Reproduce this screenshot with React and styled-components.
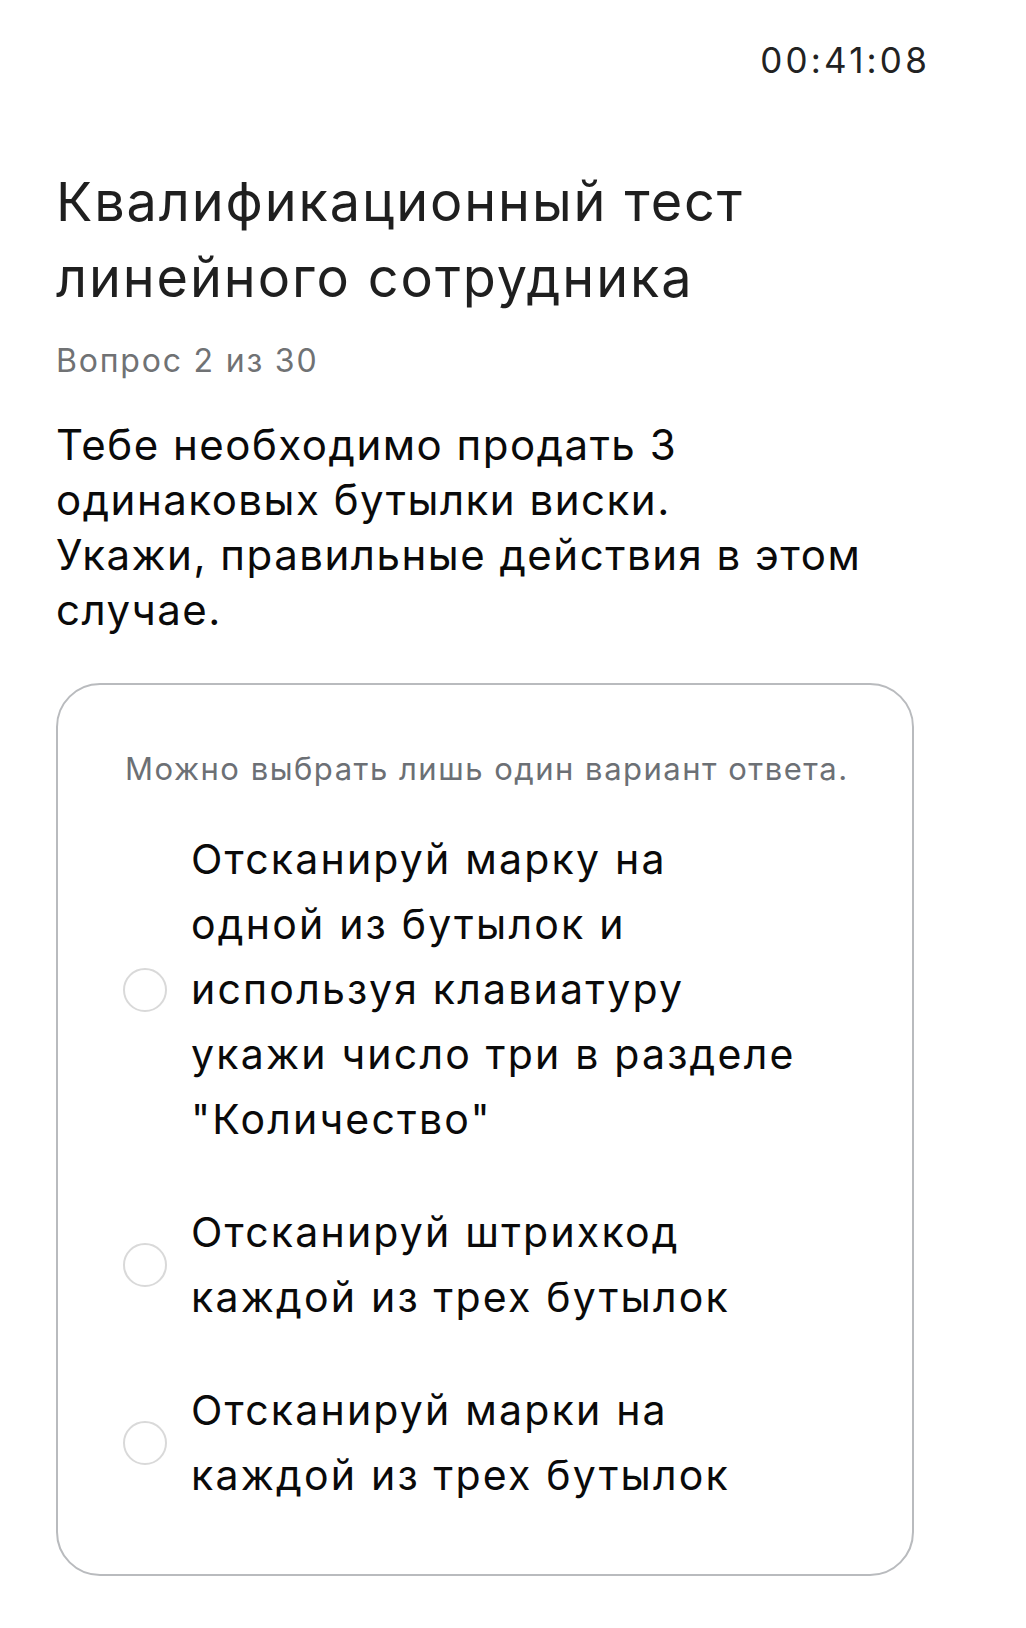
import React from 'react'
import styled, {createGlobalStyle} from 'styled-components'

const GlobalStyle = createGlobalStyle`
  html, body {
    margin: 0;
    padding: 0;
    background: #ffffff;
  }
  body {
    font-family: Inter, "Noto Sans", sans-serif;
    -webkit-font-smoothing: antialiased;
  }
`;

const Page = styled.div`
  width: 1026px;
  min-height: 1628px;
  box-sizing: border-box;
  padding: 40px 99px 40px 56px;
  display: flex;
  flex-direction: column;
`;

const TopBar = styled.div`
  display: flex;
  justify-content: flex-end;
`;

const Timer = styled.span`
  font-size: 35px;
  line-height: 40px;
  color: #222222;
  letter-spacing: 3.2px;
  margin-right: -3px;
`;

const Title = styled.h1`
  margin: 84px 0 0 0;
  font-size: 54px;
  line-height: 76px;
  font-weight: 400;
  color: #1f1f1f;
  letter-spacing: 1.9px;
`;

const Counter = styled.div`
  margin: 25px 0 0 0;
  font-size: 32px;
  line-height: 40px;
  color: #707274;
  letter-spacing: 1.8px;
`;

const Question = styled.p`
  margin: 36px 0 0 0;
  font-size: 42px;
  line-height: 55px;
  color: #0a0a0a;
  letter-spacing: 1.5px;
`;

const Card = styled.div`
  margin-top: 46px;
  width: 858px;
  box-sizing: border-box;
  border: 2px solid #b9bbbe;
  border-radius: 44px;
  padding: 64px 40px 66px 67px;
  display: flex;
  flex-direction: column;
`;

const Hint = styled.div`
  font-size: 31px;
  line-height: 40px;
  color: #6c7075;
  letter-spacing: 1.5px;
`;

const Options = styled.div`
  margin-top: 38px;
  display: flex;
  flex-direction: column;
  gap: 48px;
`;

const Option = styled.label`
  display: flex;
  align-items: center;
  gap: 24px;
  cursor: pointer;
`;

const Radio = styled.span`
  flex: none;
  width: 44px;
  height: 44px;
  box-sizing: border-box;
  border-radius: 50%;
  border: 2px solid ${p => (p.checked ? '#1f1f1f' : '#d9d9d9')};
  margin-left: -2px;
`;

const OptionText = styled.span`
  font-size: 41px;
  line-height: 65px;
  color: #0a0a0a;
  letter-spacing: 2.2px;
`;

const options = [
    ['Отсканируй марку на', 'одной из бутылок и', 'используя клавиатуру', 'укажи число три в разделе', '"Количество"'],
    ['Отсканируй штрихкод', 'каждой из трех бутылок'],
    ['Отсканируй марки на', 'каждой из трех бутылок'],
];

const Lines = ({lines}) => lines.map((line, i) => (
    <React.Fragment key={i}>
        {i > 0 && <br />}
        {line}
    </React.Fragment>
));

const App = () => {
    return (
        <Page>
            <GlobalStyle />
            <TopBar>
                <Timer>00:41:08</Timer>
            </TopBar>
            <Title>
                <Lines lines={['Квалификационный тест', 'линейного сотрудника']} />
            </Title>
            <Counter>Вопрос 2 из 30</Counter>
            <Question>
                <Lines lines={['Тебе необходимо продать 3', 'одинаковых бутылки виски.', 'Укажи, правильные действия в этом', 'случае.']} />
            </Question>
            <Card>
                <Hint>Можно выбрать лишь один вариант ответа.</Hint>
                <Options>
                    {options.map((lines, index) => (
                        <Option key={index}>
                            <Radio />
                            <OptionText>
                                <Lines lines={lines} />
                            </OptionText>
                        </Option>
                    ))}
                </Options>
            </Card>
        </Page>
    )
}

export default App;
